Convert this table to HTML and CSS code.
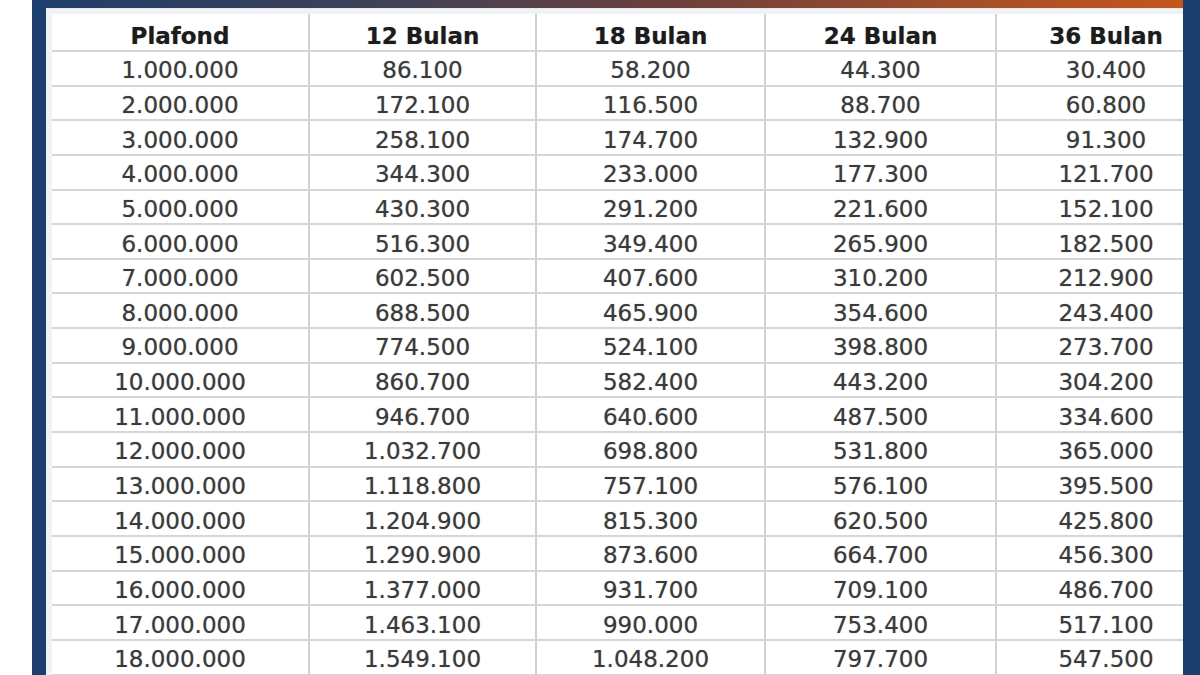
FILE: index.html
```html
<!DOCTYPE html>
<html lang="id">
<head>
<meta charset="utf-8">
<title>Tabel Angsuran</title>
<link rel="stylesheet" href="styles.css">
</head>
<body>
<div class="page">
  <div class="frame">
    <div class="side side-left"></div>
    <div class="inner">
      <div class="topband"></div>
      <div class="sheet">
        <div class="grid" id="grid">
          <div class="cell head">Plafond</div>
          <div class="cell head">12 Bulan</div>
          <div class="cell head">18 Bulan</div>
          <div class="cell head">24 Bulan</div>
          <div class="cell head">36 Bulan</div>

          <div class="cell">1.000.000</div><div class="cell">86.100</div><div class="cell">58.200</div><div class="cell">44.300</div><div class="cell">30.400</div>
          <div class="cell">2.000.000</div><div class="cell">172.100</div><div class="cell">116.500</div><div class="cell">88.700</div><div class="cell">60.800</div>
          <div class="cell">3.000.000</div><div class="cell">258.100</div><div class="cell">174.700</div><div class="cell">132.900</div><div class="cell">91.300</div>
          <div class="cell">4.000.000</div><div class="cell">344.300</div><div class="cell">233.000</div><div class="cell">177.300</div><div class="cell">121.700</div>
          <div class="cell">5.000.000</div><div class="cell">430.300</div><div class="cell">291.200</div><div class="cell">221.600</div><div class="cell">152.100</div>
          <div class="cell">6.000.000</div><div class="cell">516.300</div><div class="cell">349.400</div><div class="cell">265.900</div><div class="cell">182.500</div>
          <div class="cell">7.000.000</div><div class="cell">602.500</div><div class="cell">407.600</div><div class="cell">310.200</div><div class="cell">212.900</div>
          <div class="cell">8.000.000</div><div class="cell">688.500</div><div class="cell">465.900</div><div class="cell">354.600</div><div class="cell">243.400</div>
          <div class="cell">9.000.000</div><div class="cell">774.500</div><div class="cell">524.100</div><div class="cell">398.800</div><div class="cell">273.700</div>
          <div class="cell">10.000.000</div><div class="cell">860.700</div><div class="cell">582.400</div><div class="cell">443.200</div><div class="cell">304.200</div>
          <div class="cell">11.000.000</div><div class="cell">946.700</div><div class="cell">640.600</div><div class="cell">487.500</div><div class="cell">334.600</div>
          <div class="cell">12.000.000</div><div class="cell">1.032.700</div><div class="cell">698.800</div><div class="cell">531.800</div><div class="cell">365.000</div>
          <div class="cell">13.000.000</div><div class="cell">1.118.800</div><div class="cell">757.100</div><div class="cell">576.100</div><div class="cell">395.500</div>
          <div class="cell">14.000.000</div><div class="cell">1.204.900</div><div class="cell">815.300</div><div class="cell">620.500</div><div class="cell">425.800</div>
          <div class="cell">15.000.000</div><div class="cell">1.290.900</div><div class="cell">873.600</div><div class="cell">664.700</div><div class="cell">456.300</div>
          <div class="cell">16.000.000</div><div class="cell">1.377.000</div><div class="cell">931.700</div><div class="cell">709.100</div><div class="cell">486.700</div>
          <div class="cell">17.000.000</div><div class="cell">1.463.100</div><div class="cell">990.000</div><div class="cell">753.400</div><div class="cell">517.100</div>
          <div class="cell">18.000.000</div><div class="cell">1.549.100</div><div class="cell">1.048.200</div><div class="cell">797.700</div><div class="cell">547.500</div>
        </div>
      </div>
    </div>
    <div class="side side-right"></div>
  </div>
</div>
</body>
</html>
```

FILE: styles.css
```css
html, body {
  margin: 0;
  padding: 0;
  background: #ffffff;
  overflow: hidden;
}

.page {
  width: 1200px;
  height: 675px;
  padding-left: 32px;
  box-sizing: border-box;
  display: flex;
}

.frame {
  flex: 1;
  display: flex;
  background: #1d3f6d;
  height: 675px;
  overflow: hidden;
}

.side-left {
  width: 14px;
  flex: none;
  background: #1d3f6d;
}

.side-right {
  width: 17px;
  flex: none;
  background: #1b3e6c;
}

.inner {
  flex: 1;
  min-width: 0;
  display: flex;
  flex-direction: column;
  overflow: hidden;
}

.topband {
  height: 8px;
  flex: none;
  background: linear-gradient(to right, #1f3e69 0%, #3f4258 30%, #6c3f3c 55%, #a14e2a 80%, #c4561d 100%);
}

.sheet {
  flex: 1;
  min-height: 0;
  background: #eef3f7;
  padding: 5px 0 0 6px;
  overflow: hidden;
  border-top: 1px solid #f6e4dc;
}

.grid {
  display: grid;
  grid-template-columns: 258px 227px 229px 231px 220px;
  grid-template-rows: 38px;
  grid-auto-rows: 34.65px;
  width: max-content;
  background: #ffffff;
  font-family: "DejaVu Sans", Verdana, sans-serif;
  font-size: 23px;
  color: #3a3a3a;
}

.cell {
  display: flex;
  align-items: center;
  justify-content: center;
  border-right: 2px solid #d2d2d2;
  border-bottom: 2px solid #d6d6d6;
  box-sizing: border-box;
  white-space: nowrap;
  text-shadow: 0 0 1px rgba(50, 50, 50, 0.5);
  padding-top: 4px;
}

.head {
  font-weight: bold;
  color: #1c1c1c;
  padding-top: 8px;
  text-shadow: 0 0 1px rgba(20, 20, 20, 0.45);
}
```
